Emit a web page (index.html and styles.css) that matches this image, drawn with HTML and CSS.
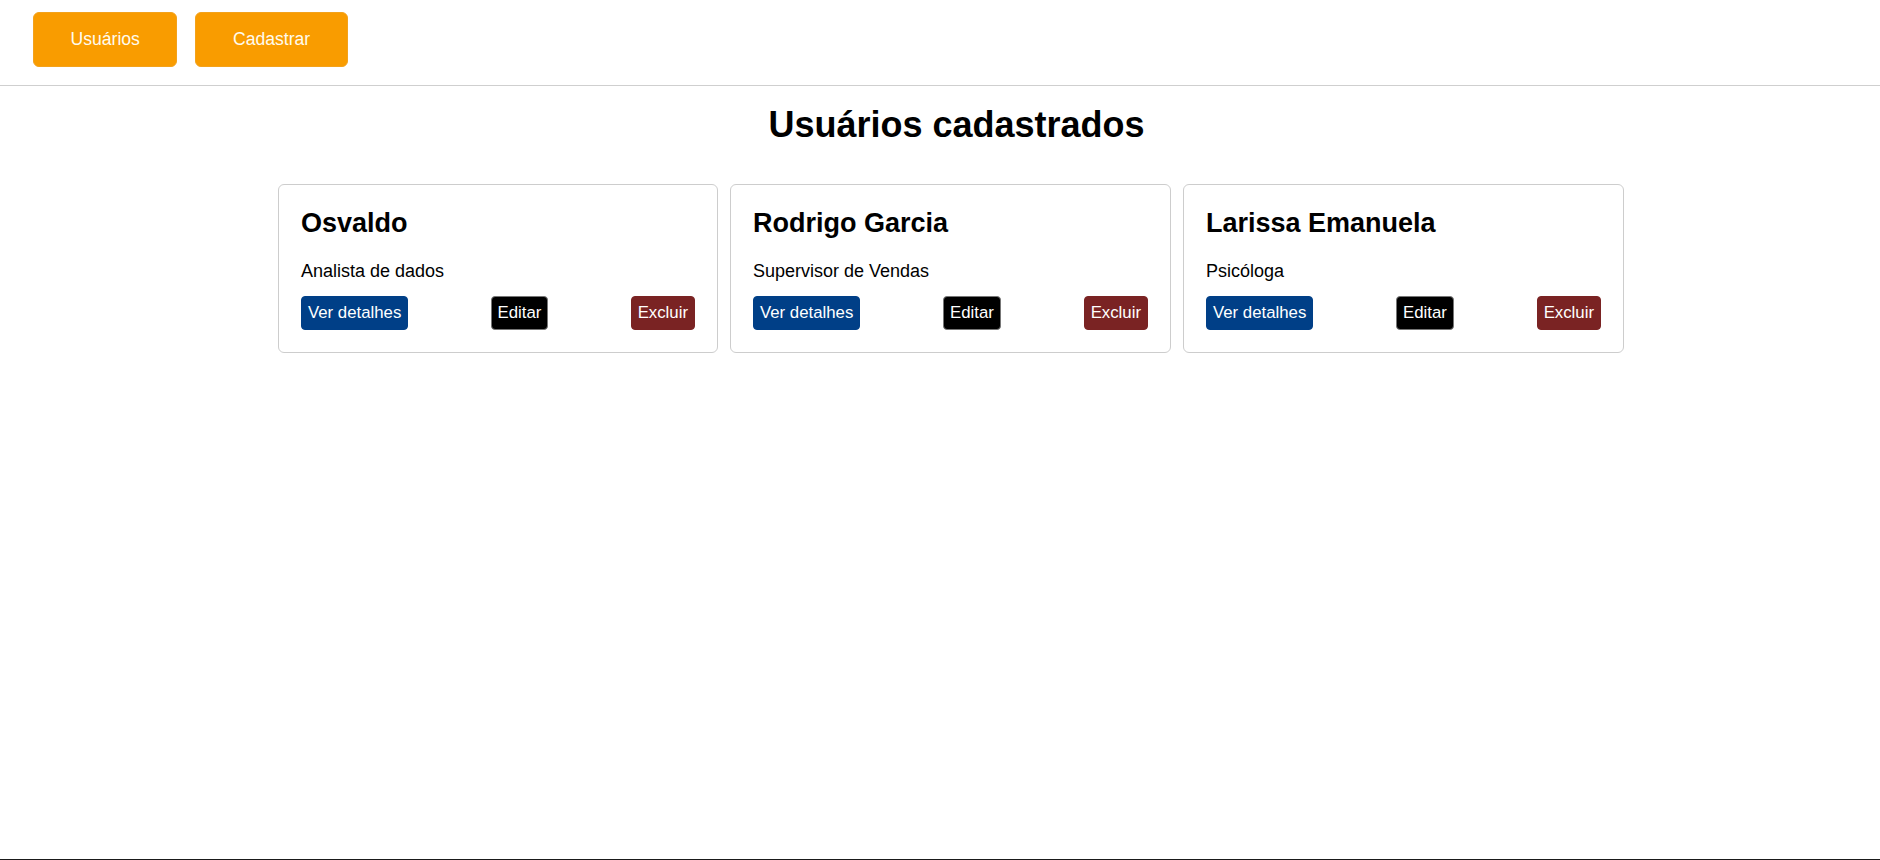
FILE: index.html
```html
<!DOCTYPE html>
<html lang="pt-BR">
<head>
<meta charset="utf-8">
<title>Usuários cadastrados</title>
<link rel="stylesheet" href="styles.css">
</head>
<body>
<header class="topbar">
  <nav class="nav">
    <button class="nav-btn">Usuários</button>
    <button class="nav-btn">Cadastrar</button>
  </nav>
</header>
<main class="main">
  <h2 class="title">Usuários cadastrados</h2>
  <div class="cards">
    <div class="card">
      <h3 class="card-name">Osvaldo</h3>
      <p class="card-role">Analista de dados</p>
      <div class="actions">
        <button class="btn btn-blue">Ver detalhes</button>
        <button class="btn btn-black">Editar</button>
        <button class="btn btn-red">Excluir</button>
      </div>
    </div>
    <div class="card">
      <h3 class="card-name">Rodrigo Garcia</h3>
      <p class="card-role">Supervisor de Vendas</p>
      <div class="actions">
        <button class="btn btn-blue">Ver detalhes</button>
        <button class="btn btn-black">Editar</button>
        <button class="btn btn-red">Excluir</button>
      </div>
    </div>
    <div class="card">
      <h3 class="card-name">Larissa Emanuela</h3>
      <p class="card-role">Psicóloga</p>
      <div class="actions">
        <button class="btn btn-blue">Ver detalhes</button>
        <button class="btn btn-black">Editar</button>
        <button class="btn btn-red">Excluir</button>
      </div>
    </div>
  </div>
</main>
</body>
</html>
```
FILE: styles.css
```css
* { box-sizing: border-box; }
html, body { margin: 0; padding: 0; }
body {
  font-family: "Liberation Sans", Arial, sans-serif;
  color: #000;
  background: #fff;
  min-height: 100vh;
  border-bottom: 1px solid #1a1a1a;
}
.topbar {
  height: 86px;
  border-bottom: 1px solid #cfcfcf;
  padding: 12px 0 0 33px;
}
.nav { display: flex; gap: 18px; }
.nav-btn {
  height: 55px;
  padding: 0 36.5px;
  background: #f99c00;
  color: #fffbee;
  border: 1px solid #f3a21c;
  border-radius: 6px;
  font-family: inherit;
  font-size: 17.6px;
}
.main { padding-left: 33px; }
.title {
  margin: 19px 0 0;
  font-size: 36px;
  line-height: 40px;
  text-align: center;
  font-weight: bold;
}
.cards {
  display: flex;
  width: 1357px;
  margin: 39px auto 0;
}
.card {
  width: 441px;
  margin-right: 12px;
  border: 1px solid #cdcdcd;
  border-radius: 6px;
  padding: 23px 22px 22px;
  flex: none;
}
.card:nth-child(1) { width: 440px; }
.card-name {
  margin: 0 0 23px;
  font-size: 27px;
  line-height: 30px;
  font-weight: bold;
}
.card-role {
  margin: 0 0 15px;
  font-size: 18px;
  line-height: 20px;
}
.actions {
  display: flex;
  justify-content: space-between;
}
.btn {
  height: 34px;
  padding: 0 6px;
  font-family: inherit;
  font-size: 16.8px;
  color: #fff;
  border-radius: 4px;
  border: 1px solid transparent;
}
.btn-blue { background: #003f87; border-color: #003f87; }
.btn-black { background: #000; border-color: #777; }
.btn-red { background: #7a2323; border-color: #7a2323; }
```
